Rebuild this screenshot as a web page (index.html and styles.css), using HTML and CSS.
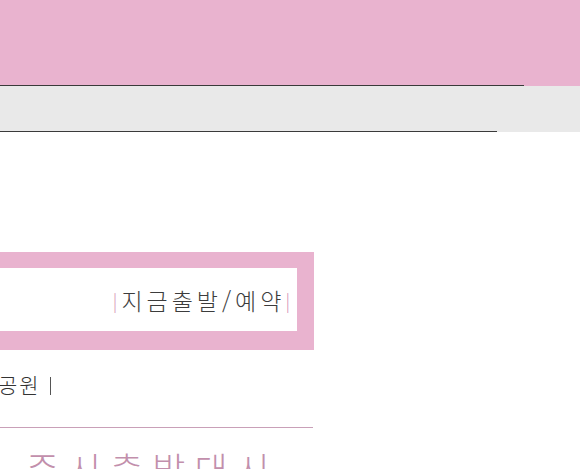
FILE: index.html
```html
<!DOCTYPE html>
<html lang="ko">
<head>
<meta charset="utf-8">
<link rel="stylesheet" href="styles.css">
</head>
<body>
<header class="top"></header>
<div class="topline"></div>
<nav class="sub">
  <div class="subline"></div>
</nav>
<main class="content">
  <div class="box">
    <div class="box-inner">
      <span class="bar">|</span>지금출발/예약<span class="bar">|</span>
    </div>
  </div>
  <p class="place">서울숲공원 <span class="sep"></span></p>
  <div class="rule"></div>
  <h2 class="big">준시출발대시</h2>
</main>
</body>
</html>
```

FILE: styles.css
```css
html, body {
  margin: 0;
  padding: 0;
  background: #ffffff;
  overflow: hidden;
}
body {
  width: 580px;
  height: 469px;
  font-family: "Noto Sans CJK KR", "Noto Sans", sans-serif;
}
.top {
  height: 86px;
  background: #e9b3cf;
}
.topline {
  height: 1px;
  background: #e9e9e9;
  border-top: 1px solid #3a3a3a;
  width: 524px;
  box-sizing: border-box;
  margin-top: -1px;
}
.sub {
  height: 46px;
  background: #e9e9e9;
  display: flex;
  align-items: flex-end;
}
.subline {
  width: 497px;
  height: 1px;
  background: #3a3a3a;
}
.content {
  width: 314px;
  padding-top: 120px;
}
.box {
  background: #e9b3cf;
  padding: 16px 17px 19px 0;
}
.box-inner {
  background: #ffffff;
  height: 63px;
  display: flex;
  align-items: center;
  justify-content: flex-end;
  padding-right: 3px;
  font-size: 23px;
  letter-spacing: 4px;
  color: #3c3c3c;
  font-weight: 300;
}
.bar {
  color: #d48fb4;
  font-size: 18px;
}
.place {
  margin: 0;
  padding-top: 19px;
  height: 58px;
  box-sizing: border-box;
  font-size: 21px;
  letter-spacing: 2px;
  color: #333333;
  font-weight: 300;
  white-space: nowrap;
  display: flex;
  align-items: flex-start;
  justify-content: flex-start;
  margin-left: -66px;
  height: 77px;
}
.sep {
  display: inline-block;
  width: 1px;
  height: 18px;
  background: #555555;
  margin-top: 8px;
  margin-left: 9px;
}
.rule {
  height: 1px;
  background: #c9a0b8;
  width: 313px;
}
.big {
  margin: 0;
  padding-top: 18px;
  padding-left: 26px;
  font-size: 36px;
  line-height: 44px;
  font-weight: 300;
  color: #c28fac;
  letter-spacing: 9px;
  white-space: nowrap;
}
```
